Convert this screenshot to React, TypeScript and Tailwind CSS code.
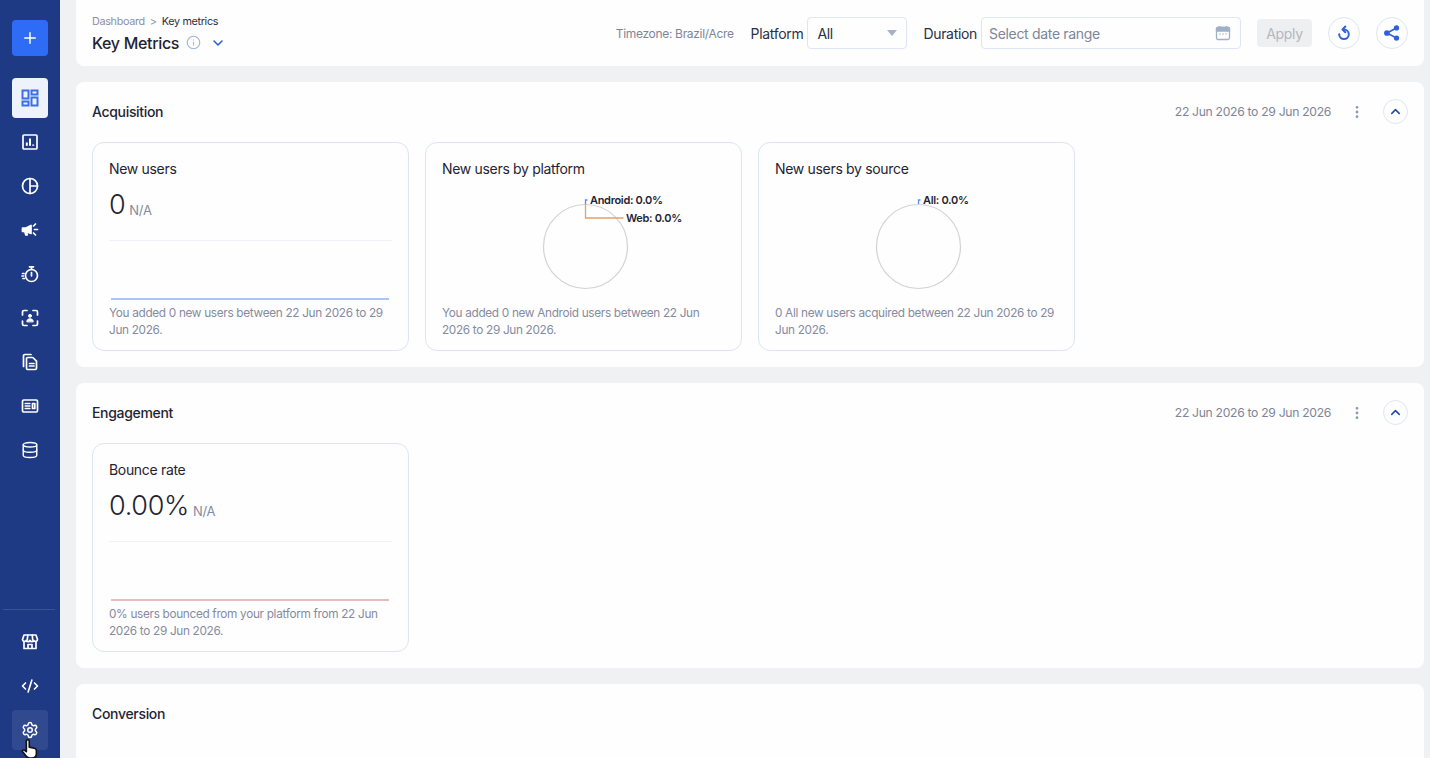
import {
  ChevronDown,
  ChevronUp,
  CodeXml,
  Database,
  EllipsisVertical,
  Info,
  Plus,
  Settings,
} from "lucide-react";
import type { ReactNode } from "react";

const ICON = "w-[18px] h-[18px] text-white";

function Glyph({ children }: { children: ReactNode }) {
  return (
    <svg viewBox="0 0 18 18" fill="none" stroke="currentColor" strokeWidth="1.700" strokeLinecap="round" strokeLinejoin="round" className={ICON}>
      {children}
    </svg>
  );
}

const navIcons: ReactNode[] = [
  <Glyph key="chart">
    <rect x="2" y="2" width="14" height="14" rx="1" />
    <path d="M5.800 12.800V9.500M9 12.800V5.500M12.200 12.800v-1.200" strokeWidth="2" strokeLinecap="butt" />
  </Glyph>,
  <Glyph key="pie">
    <circle cx="9" cy="9" r="7.500" />
    <path d="M9 1.500v15M9 9h7.500" />
  </Glyph>,
  <Glyph key="megaphone">
    <path d="M1.500 7h3.500l5-2.500v8L5 10.500H1.500z" fill="currentColor" />
    <path d="M4 11l.800 3h1.400L5.800 11M13.500 8.500h3M12.500 5l2-2M12.500 12l2 2" />
  </Glyph>,
  <Glyph key="timer">
    <circle cx="10.500" cy="10.500" r="6" />
    <path d="M10.500 7.500v3.300M8.500 1.800h4M10.500 1.800v2.500M1.500 8.500h1.500M1 11h1.500M2 13.500h1.500" />
  </Glyph>,
  <Glyph key="frame">
    <path d="M6 1.500H3A1.500 1.500 0 0 0 1.500 3v3M12 1.500h3A1.500 1.500 0 0 1 16.500 3v3M6 16.500H3A1.500 1.500 0 0 1 1.500 15v-3M12 16.500h3a1.500 1.500 0 0 0 1.500-1.500v-3" />
    <circle cx="9" cy="6.800" r="1.500" fill="currentColor" strokeWidth="1" />
    <path d="M5.800 12.500c0-1.800 1.300-2.700 3.200-2.700s3.200.900 3.200 2.700z" fill="currentColor" strokeWidth="1" />
  </Glyph>,
  <Glyph key="files">
    <path d="M2.500 13.500V2.800a1.300 1.300 0 0 1 1.300-1.300H10" />
    <path d="M5.500 5.800a1.300 1.300 0 0 1 1.300-1.300h5l3.700 3.700v7a1.300 1.300 0 0 1-1.300 1.300H6.800a1.300 1.300 0 0 1-1.300-1.300z" />
    <path d="M8.500 10.500h4.500M8.500 13h4.500" />
  </Glyph>,
  <Glyph key="card">
    <rect x="1.500" y="3" width="15" height="12" rx="1.300" />
    <path d="M4.300 6.500h4.500M4.300 9h4.500M4.300 11.500h4.500M11.500 6.500h2.300v5h-2.300z" />
  </Glyph>,
];

function NavItem({ children, className = "" }: { children: ReactNode; className?: string }) {
  return <div className={`flex h-10 w-9 items-center justify-center rounded ${className}`}>{children}</div>;
}

function Sidebar() {
  return (
    <aside className="relative flex h-full w-[60px] shrink-0 flex-col bg-[#1f3a85]">
      <div className="mt-5 flex flex-col items-center">
        <div className="flex h-9 w-9 items-center justify-center rounded bg-[#2f6cf6]">
          <Plus className="h-[18px] w-[18px] text-white" strokeWidth={2} />
        </div>
        <div className="mt-[22px] flex flex-col gap-1">
          <NavItem className="bg-[#eef2fa]">
            <svg viewBox="0 0 18 18" fill="none" stroke="#3b6ee8" strokeWidth="2" className="h-[18px] w-[18px]">
              <rect x="1.500" y="1.500" width="6" height="8" />
              <rect x="10.500" y="1.500" width="6" height="4" />
              <rect x="1.500" y="12.500" width="6" height="4" />
              <rect x="10.500" y="8.500" width="6" height="8" />
            </svg>
          </NavItem>
          {navIcons.map((icon, i) => (
            <NavItem key={i}>{icon}</NavItem>
          ))}
          <NavItem>
            <Database className={ICON} strokeWidth={1.900} />
          </NavItem>
        </div>
      </div>
      <div className="mt-auto ml-[3px] mr-[5px] flex flex-col items-center gap-1 border-t border-[#3a5296] pt-3 pb-2">
        <NavItem className="ml-[2px]">
          <Glyph>
            <path d="M3 2h12l1.500 4.500a2 2 0 0 1-3.750.900 2 2 0 0 1-3.750 0 2 2 0 0 1-3.750 0A2 2 0 0 1 1.500 6.500z" />
            <path d="M6.800 2l-.550 5M11.200 2l.550 5M3 9v6.500h12V9M7 15.500v-4h4v4" />
          </Glyph>
        </NavItem>
        <NavItem className="ml-[2px]">
          <CodeXml className={ICON} strokeWidth={2.200} />
        </NavItem>
        <NavItem className="ml-[2px] bg-[#30498f]">
          <Settings className={ICON} strokeWidth={2} />
        </NavItem>
      </div>
      {/* mouse pointer caught in the capture */}
      <svg viewBox="0 0 24 24" className="absolute left-[19px] top-[738px] h-[22px] w-[22px]" fill="#fff" stroke="#111" strokeWidth="1.800" strokeLinejoin="round">
        <path d="M8 3.500a1.600 1.600 0 0 1 3.200 0V10l5.500 1.200c1.400.3 2.300 1.300 2.300 2.800v3c0 3-2 5-5 5h-2c-2 0-3.200-.8-4.300-2.300L4 15c-.9-1.400 1-2.800 2.200-1.600L8 15z" />
      </svg>
    </aside>
  );
}

function Header() {
  return (
    <header className="flex h-[66px] shrink-0 items-center justify-between rounded-b-lg bg-[#fefefe] px-4">
      <div className="pb-[2px]">
        <div className="mt-[4px] flex items-center gap-[5px] text-[10.800px] leading-[14px] text-[#8a90a3]">
          <span>Dashboard</span>
          <span>&gt;</span>
          <span className="text-[#2b3142]">Key metrics</span>
        </div>
        <div className="mt-[3px] flex items-center">
          <h1 className="text-[16px] leading-[22px] font-medium text-[#1f2433]">Key Metrics</h1>
          <Info className="ml-[7px] h-[15px] w-[15px] text-[#9db4dc]" strokeWidth={1.800} />
          <ChevronDown className="ml-[9px] h-[16px] w-[16px] text-[#2f5fc9]" strokeWidth={2.400} />
        </div>
      </div>
      <div className="flex items-center">
        <span className="mt-[2px] text-[12px] text-[#7f8598]">Timezone: Brazil/Acre</span>
        <span className="ml-[17px] text-[14px] text-[#2b3142]">Platform</span>
        <div className="ml-1 flex h-8 w-[100px] items-center justify-between rounded border border-[#dfe5f3] pr-[9px] pl-[9px] text-[14px] text-[#2b3142]">
          <span>All</span>
          <span className="h-0 w-0 border-x-[5px] border-t-[6px] border-x-transparent border-t-[#a9b2c4]" />
        </div>
        <span className="ml-4 text-[14px] text-[#2b3142]">Duration</span>
        <div className="ml-1 flex h-8 w-[260px] items-center justify-between rounded border border-[#dfe5f3] pr-[9px] pl-[7px] text-[14px] text-[#7f8598]">
          <span>Select date range</span>
          <svg viewBox="0 0 16 16" className="h-4 w-4" fill="none" stroke="#9fb0c8" strokeWidth="1.300">
            <rect x="1.500" y="2.500" width="13" height="12" rx="1.500" />
            <path d="M1.500 3.500a1 1 0 0 1 1-1h11a1 1 0 0 1 1 1V6h-13z" fill="#9fb0c8" />
            <path d="M4.500 1v2M11.500 1v2M4.500 9h1M7.500 9h1M10.500 9h1" />
          </svg>
        </div>
        <div className="ml-4 flex h-7 w-[55px] items-center justify-center rounded bg-[#eeeff1] text-[14px] text-[#b4b7bd]">Apply</div>
        <div className="ml-4 flex h-8 w-8 items-center justify-center rounded-full border border-[#dfe5f3]">
          <svg viewBox="0 0 16 16" className="h-4 w-4" fill="none" stroke="#2f62d9" strokeWidth="2" strokeLinecap="round" strokeLinejoin="round">
            <path d="M8 4.500a4.800 4.800 0 1 1-4.800 4.800" />
            <path d="M9.300 1.500L6.500 4.500l2.800 2.800" />
          </svg>
        </div>
        <div className="ml-4 flex h-8 w-8 items-center justify-center rounded-full border border-[#dfe5f3]">
          <svg viewBox="0 0 16 16" className="h-[18px] w-[18px]" fill="#2f62d9" stroke="#2f62d9" strokeWidth="1.500">
            <circle cx="12" cy="3.500" r="1.600" />
            <circle cx="3.500" cy="8" r="1.800" />
            <circle cx="12" cy="12.500" r="1.600" />
            <path d="M12 3.500L3.500 8l8.500 4.500" fill="none" />
          </svg>
        </div>
      </div>
    </header>
  );
}

function Section({ title, date, children }: { title: string; date?: boolean; children?: ReactNode }) {
  return (
    <section className="shrink-0 rounded-lg bg-[#fefefe] px-4 pb-4">
      <div className="flex h-[60px] items-center justify-between pb-[1px]">
        <h2 className="text-[14px] font-medium text-[#1f2433]">{title}</h2>
        {date && (
          <div className="flex items-center">
            <span className="mt-[1px] text-[12.200px] text-[#7f8598]">22 Jun 2026 to 29 Jun 2026</span>
            <EllipsisVertical className="ml-[18px] h-4 w-4 text-[#8a9bb8]" strokeWidth={2.200} />
            <div className="ml-[18px] flex h-[25px] w-[25px] items-center justify-center rounded-full border border-[#dfe5f3]">
              <ChevronUp className="h-[15px] w-[15px] text-[#1f4aa8]" strokeWidth={2.400} />
            </div>
          </div>
        )}
      </div>
      {children && <div className="flex gap-4">{children}</div>}
    </section>
  );
}

function Card({ title, note, children }: { title: string; note: string; children: ReactNode }) {
  return (
    <div className="flex h-[209px] w-[317px] flex-col rounded-xl border border-[#dde4f3] px-4 pt-4 pb-[11px]">
      <h3 className="text-[14px] leading-5 text-[#1f2433]">{title}</h3>
      {children}
      <p className="mt-auto text-[11.800px] leading-[17px] text-[#858ba0]">{note}</p>
    </div>
  );
}

function MetricCard({ title, value, note, line }: { title: string; value: string; note: string; line: string }) {
  return (
    <Card title={title} note={note}>
      <div className="mt-2 flex h-9 items-end">
        <span className="text-[27px] leading-9 font-light text-[#1f2433]">{value}</span>
        <span className="mb-[5px] ml-1 text-[13px] leading-4 text-[#858ba0]">N/A</span>
      </div>
      <div className="mt-[17px] border-t border-[#eef1f8]" />
      <div className={`mx-[2px] mt-[57px] h-[1.500px] w-[278px] ${line}`} />
    </Card>
  );
}

function PieCard({ title, note, slices }: { title: string; note: string; slices: { label: string; stroke: string; path: string; x: number; y: number }[] }) {
  return (
    <Card title={title} note={note}>
      <svg viewBox="0 0 283 110" className="mt-[11px] h-[110px] w-[283px]">
        <circle cx="143.500" cy="56.500" r="42" fill="none" stroke="#d3d3d6" strokeWidth="1.200" />
        {slices.map((s) => (
          <g key={s.label}>
            <path d={s.path} fill="none" stroke={s.stroke} strokeWidth="1.300" />
            <text x={s.x} y={s.y} fontSize="11" fontWeight="600" fill="#1f2433">
              {s.label}
            </text>
          </g>
        ))}
      </svg>
    </Card>
  );
}

export default function App() {
  return (
    <div className="flex h-screen w-full overflow-hidden bg-[#f0f1f3] font-['Inter',sans-serif] tracking-[-0.02em]">
      <Sidebar />
      <main className="flex h-full flex-1 flex-col gap-4 overflow-hidden pr-[6px] pl-4">
        <Header />
        <Section title="Acquisition" date>
          <MetricCard
            title="New users"
            value="0"
            line="bg-[#a9c6f5]"
            note="You added 0 new users between 22 Jun 2026 to 29 Jun 2026."
          />
          <PieCard
            title="New users by platform"
            note="You added 0 new Android users between 22 Jun 2026 to 29 Jun 2026."
            slices={[
              { label: "Android: 0.0%", stroke: "#5b8def", path: "M143.500 14V10h2", x: 148, y: 14 },
              { label: "Web: 0.0%", stroke: "#e8a06a", path: "M143.500 14V28h38", x: 184, y: 32 },
            ]}
          />
          <PieCard
            title="New users by source"
            note="0 All new users acquired between 22 Jun 2026 to 29 Jun 2026."
            slices={[{ label: "All: 0.0%", stroke: "#5b8def", path: "M143.500 14V10h2", x: 148, y: 14 }]}
          />
        </Section>
        <Section title="Engagement" date>
          <MetricCard
            title="Bounce rate"
            value="0.00%"
            line="bg-[#e6bcbc]"
            note="0% users bounced from your platform from 22 Jun 2026 to 29 Jun 2026."
          />
        </Section>
        <Section title="Conversion">
          <div className="h-[60px]" />
        </Section>
      </main>
    </div>
  );
}
